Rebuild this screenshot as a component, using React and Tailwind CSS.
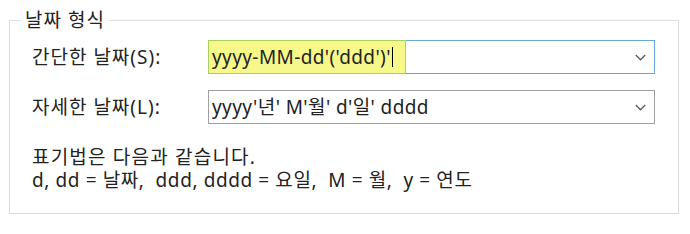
import React from "react";

const font = { fontFamily: '"Noto Sans", "Noto Sans CJK KR", sans-serif' };

function Chevron() {
  return (
    <svg width="11" height="7" viewBox="0 0 11 7" className="shrink-0">
      <path d="M0.8 1 L5.5 5.8 L10.2 1" fill="none" stroke="#5a5a5a" strokeWidth="1.3" />
    </svg>
  );
}

function Combo({ value, focused }) {
  return (
    <div
      className={
        "flex items-center w-[447px] h-[34px] bg-white border pr-[8px] " +
        (focused ? "border-[#6aa6d6]" : "border-[#a0a0a0]")
      }
    >
      {focused ? (
        <div className="flex items-center h-[34px] bg-[#f6f98a] border border-[#a8cf62] pl-[3px] w-[198px] -ml-px">
          <span className="tracking-[0.4px]">{value}</span>
          <span className="ml-[1px] w-px h-[20px] bg-black" />
        </div>
      ) : (
        <span className="pl-[3px] tracking-[0.4px]">{value}</span>
      )}
      <div className="flex-1" />
      <Chevron />
    </div>
  );
}

export default function App() {
  return (
    <div className="w-[690px] h-[234px] bg-white pt-[10px] text-[19px] text-[#222]" style={font}>
      <fieldset className="ml-[9px] w-[670px] h-[204px] border border-[#dcdcdc] pl-[22px] pt-[10px]">
        <legend className="-ml-[11px] px-[4px] leading-[20px] tracking-[1px]">날짜 형식</legend>
        <div className="flex items-center">
          <span className="w-[176px] tracking-[1px]">간단한 날짜(S):</span>
          <Combo value="yyyy-MM-dd'('ddd')'" focused />
        </div>
        <div className="flex items-center mt-[16px]">
          <span className="w-[176px] tracking-[1px]">자세한 날짜(L):</span>
          <Combo value="yyyy'년' M'월' d'일' dddd" />
        </div>
        <div className="mt-[22px] leading-[23px]">
          <div className="tracking-[1.2px]">표기법은 다음과 같습니다.</div>
          <div className="whitespace-pre tracking-[0.6px]">{"d, dd = 날짜,  ddd, dddd = 요일,  M = 월,  y = 연도"}</div>
        </div>
      </fieldset>
    </div>
  );
}
